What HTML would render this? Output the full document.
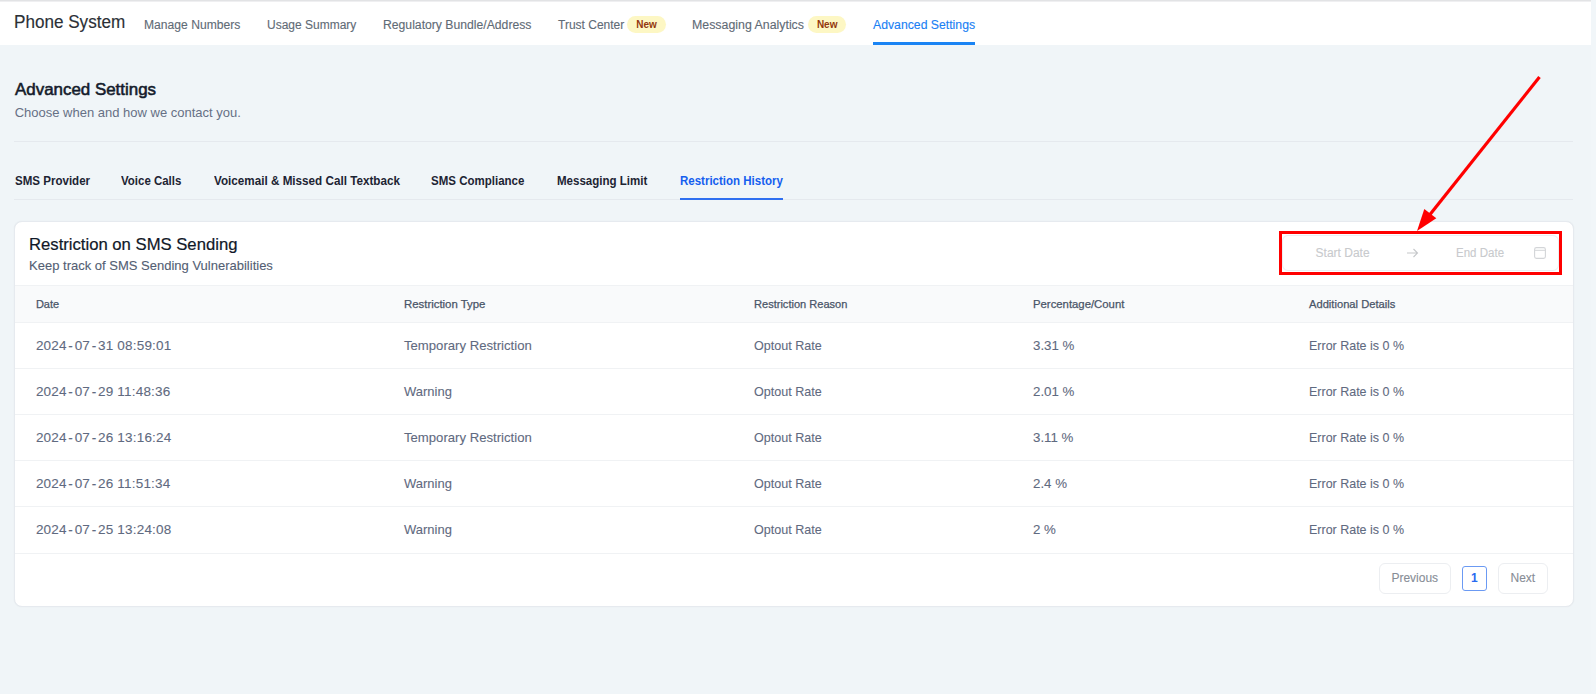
<!DOCTYPE html>
<html>
<head>
<meta charset="utf-8">
<style>
*{box-sizing:border-box;margin:0;padding:0}
html,body{width:1596px;height:694px;overflow:hidden}
body{background:#f0f5f8;font-family:"Liberation Sans",sans-serif;position:relative}
.t{position:absolute;white-space:nowrap}
</style>
</head>
<body>
<div style="position:absolute;left:0;top:0;width:1591px;height:1px;background:#e2e3e5"></div>
<div style="position:absolute;left:0;top:1px;width:1591px;height:1px;background:#efeff1"></div>
<div style="position:absolute;left:0;top:2px;width:1591px;height:43px;background:#fff"></div>
<div style="position:absolute;left:1591px;top:0;width:5px;height:694px;background:#f1f6f9"></div>
<div class="t" style="left:14px;top:13px;font-size:18px;line-height:18px;color:#2b3036;font-weight:normal;transform:scaleX(0.95);transform-origin:0 0;-webkit-text-stroke:0.15px #2b3036">Phone System</div>
<div class="t" style="left:144px;top:19px;font-size:12px;line-height:12px;color:#5f6b76;font-weight:normal;transform:scaleX(1.01);transform-origin:0 0;-webkit-text-stroke:0.12px #5f6b76">Manage Numbers</div>
<div class="t" style="left:267px;top:19px;font-size:12px;line-height:12px;color:#5f6b76;font-weight:normal;-webkit-text-stroke:0.12px #5f6b76">Usage Summary</div>
<div class="t" style="left:382.5px;top:19px;font-size:12px;line-height:12px;color:#5f6b76;font-weight:normal;transform:scaleX(1.016);transform-origin:0 0;-webkit-text-stroke:0.12px #5f6b76">Regulatory Bundle/Address</div>
<div class="t" style="left:558px;top:19px;font-size:12px;line-height:12px;color:#5f6b76;font-weight:normal;-webkit-text-stroke:0.12px #5f6b76">Trust Center</div>
<div class="t" style="left:692.4px;top:19px;font-size:12px;line-height:12px;color:#5f6b76;font-weight:normal;transform:scaleX(1.03);transform-origin:0 0;-webkit-text-stroke:0.12px #5f6b76">Messaging Analytics</div>
<div style="position:absolute;left:627.2px;top:16px;width:38.5px;height:17px;border-radius:9px;background:#fdf7c4"></div>
<div class="t" style="left:636.2px;top:20px;font-size:10px;line-height:10px;color:#93370d;font-weight:bold">New</div>
<div style="position:absolute;left:807.9px;top:16px;width:38.5px;height:17px;border-radius:9px;background:#fdf7c4"></div>
<div class="t" style="left:816.9px;top:20px;font-size:10px;line-height:10px;color:#93370d;font-weight:bold">New</div>
<div class="t" style="left:872.7px;top:19px;font-size:12px;line-height:12px;color:#1a80f4;font-weight:normal;transform:scaleX(1.02);transform-origin:0 0;-webkit-text-stroke:0.12px #1a80f4">Advanced Settings</div>
<div style="position:absolute;left:872.5px;top:42px;width:102.5px;height:3px;background:#1a84f4"></div>
<div class="t" style="left:14.7px;top:81px;font-size:16.5px;line-height:16.5px;color:#141b2b;font-weight:normal;transform:scaleX(1.025);transform-origin:0 0;-webkit-text-stroke:0.55px #141b2b">Advanced Settings</div>
<div class="t" style="left:14.7px;top:106px;font-size:13px;line-height:13px;color:#667085;font-weight:normal">Choose when and how we contact you.</div>
<div style="position:absolute;left:14px;top:141px;width:1559px;height:1px;background:#e5e9ee"></div>
<div class="t" style="left:14.5px;top:175px;font-size:12px;line-height:12px;color:#1d2433;font-weight:bold;transform:scaleX(0.962);transform-origin:0 0">SMS Provider</div>
<div class="t" style="left:121px;top:175px;font-size:12px;line-height:12px;color:#1d2433;font-weight:bold;transform:scaleX(0.956);transform-origin:0 0">Voice Calls</div>
<div class="t" style="left:213.7px;top:175px;font-size:12px;line-height:12px;color:#1d2433;font-weight:bold;transform:scaleX(0.974);transform-origin:0 0">Voicemail &amp; Missed Call Textback</div>
<div class="t" style="left:431.4px;top:175px;font-size:12px;line-height:12px;color:#1d2433;font-weight:bold;transform:scaleX(0.959);transform-origin:0 0">SMS Compliance</div>
<div class="t" style="left:556.9px;top:175px;font-size:12px;line-height:12px;color:#1d2433;font-weight:bold;transform:scaleX(0.961);transform-origin:0 0">Messaging Limit</div>
<div class="t" style="left:679.5px;top:175px;font-size:12px;line-height:12px;color:#155eef;font-weight:bold;transform:scaleX(0.959);transform-origin:0 0">Restriction History</div>
<div style="position:absolute;left:14px;top:199px;width:1559px;height:1px;background:#e5e9ee"></div>
<div style="position:absolute;left:679.5px;top:198px;width:103px;height:2px;background:#2f6ff0"></div>
<div style="position:absolute;left:14px;top:221px;width:1560px;height:386px;background:#fff;border:1px solid #e6eaef;border-radius:8px;box-shadow:0 0 1.5px rgba(16,24,40,0.06)"></div>
<div class="t" style="left:29.1px;top:236px;font-size:16.5px;line-height:16.5px;color:#101828;font-weight:normal;transform:scaleX(1.01);transform-origin:0 0;-webkit-text-stroke:0.2px #101828">Restriction on SMS Sending</div>
<div class="t" style="left:29.1px;top:259px;font-size:13px;line-height:13px;color:#535e73;font-weight:normal;-webkit-text-stroke:0.1px #535e73">Keep track of SMS Sending Vulnerabilities</div>
<div style="position:absolute;left:15px;top:285px;width:1558px;height:37px;background:#f9fafb;border-top:1px solid #f0f2f4"></div>
<div class="t" style="left:35.9px;top:299px;font-size:11px;line-height:11px;color:#4a5568;font-weight:normal;-webkit-text-stroke:0.25px #4a5568">Date</div>
<div class="t" style="left:404px;top:299px;font-size:11px;line-height:11px;color:#4a5568;font-weight:normal;transform:scaleX(1.035);transform-origin:0 0;-webkit-text-stroke:0.25px #4a5568">Restriction Type</div>
<div class="t" style="left:753.6px;top:299px;font-size:11px;line-height:11px;color:#4a5568;font-weight:normal;transform:scaleX(1.005);transform-origin:0 0;-webkit-text-stroke:0.25px #4a5568">Restriction Reason</div>
<div class="t" style="left:1033.1px;top:299px;font-size:11px;line-height:11px;color:#4a5568;font-weight:normal;transform:scaleX(1.03);transform-origin:0 0;-webkit-text-stroke:0.25px #4a5568">Percentage/Count</div>
<div class="t" style="left:1308.8px;top:299px;font-size:11px;line-height:11px;color:#4a5568;font-weight:normal;transform:scaleX(1.015);transform-origin:0 0;-webkit-text-stroke:0.25px #4a5568">Additional Details</div>
<div style="position:absolute;left:15px;top:322px;width:1558px;height:1px;background:#f0f2f4"></div>
<div style="position:absolute;left:15px;top:368px;width:1558px;height:1px;background:#f0f2f4"></div>
<div style="position:absolute;left:15px;top:414px;width:1558px;height:1px;background:#f0f2f4"></div>
<div style="position:absolute;left:15px;top:460px;width:1558px;height:1px;background:#f0f2f4"></div>
<div style="position:absolute;left:15px;top:506px;width:1558px;height:1px;background:#f0f2f4"></div>
<div style="position:absolute;left:15px;top:553px;width:1558px;height:1px;background:#f0f2f4"></div>
<div class="t" style="left:35.9px;top:339px;font-size:13.5px;line-height:13.5px;color:#5f6a80;font-weight:normal;letter-spacing:0.2px;-webkit-text-stroke:0.1px #5f6a80">2024<span style="margin:0 1.6px">-</span>07<span style="margin:0 1.6px">-</span>31 08:59:01</div>
<div class="t" style="left:404px;top:339px;font-size:13.5px;line-height:13.5px;color:#5f6a80;font-weight:normal;transform:scaleX(0.973);transform-origin:0 0;-webkit-text-stroke:0.1px #5f6a80">Temporary Restriction</div>
<div class="t" style="left:753.6px;top:339px;font-size:13.5px;line-height:13.5px;color:#5f6a80;font-weight:normal;transform:scaleX(0.93);transform-origin:0 0;-webkit-text-stroke:0.1px #5f6a80">Optout Rate</div>
<div class="t" style="left:1033.1px;top:339px;font-size:13.5px;line-height:13.5px;color:#5f6a80;font-weight:normal;transform:scaleX(0.985);transform-origin:0 0;-webkit-text-stroke:0.1px #5f6a80">3.31 %</div>
<div class="t" style="left:1308.8px;top:339px;font-size:13.5px;line-height:13.5px;color:#5f6a80;font-weight:normal;transform:scaleX(0.924);transform-origin:0 0;-webkit-text-stroke:0.1px #5f6a80">Error Rate is 0 %</div>
<div class="t" style="left:35.9px;top:385px;font-size:13.5px;line-height:13.5px;color:#5f6a80;font-weight:normal;letter-spacing:0.2px;-webkit-text-stroke:0.1px #5f6a80">2024<span style="margin:0 1.6px">-</span>07<span style="margin:0 1.6px">-</span>29 11:48:36</div>
<div class="t" style="left:404px;top:385px;font-size:13.5px;line-height:13.5px;color:#5f6a80;font-weight:normal;transform:scaleX(0.962);transform-origin:0 0;-webkit-text-stroke:0.1px #5f6a80">Warning</div>
<div class="t" style="left:753.6px;top:385px;font-size:13.5px;line-height:13.5px;color:#5f6a80;font-weight:normal;transform:scaleX(0.93);transform-origin:0 0;-webkit-text-stroke:0.1px #5f6a80">Optout Rate</div>
<div class="t" style="left:1033.1px;top:385px;font-size:13.5px;line-height:13.5px;color:#5f6a80;font-weight:normal;transform:scaleX(0.985);transform-origin:0 0;-webkit-text-stroke:0.1px #5f6a80">2.01 %</div>
<div class="t" style="left:1308.8px;top:385px;font-size:13.5px;line-height:13.5px;color:#5f6a80;font-weight:normal;transform:scaleX(0.924);transform-origin:0 0;-webkit-text-stroke:0.1px #5f6a80">Error Rate is 0 %</div>
<div class="t" style="left:35.9px;top:431px;font-size:13.5px;line-height:13.5px;color:#5f6a80;font-weight:normal;letter-spacing:0.2px;-webkit-text-stroke:0.1px #5f6a80">2024<span style="margin:0 1.6px">-</span>07<span style="margin:0 1.6px">-</span>26 13:16:24</div>
<div class="t" style="left:404px;top:431px;font-size:13.5px;line-height:13.5px;color:#5f6a80;font-weight:normal;transform:scaleX(0.973);transform-origin:0 0;-webkit-text-stroke:0.1px #5f6a80">Temporary Restriction</div>
<div class="t" style="left:753.6px;top:431px;font-size:13.5px;line-height:13.5px;color:#5f6a80;font-weight:normal;transform:scaleX(0.93);transform-origin:0 0;-webkit-text-stroke:0.1px #5f6a80">Optout Rate</div>
<div class="t" style="left:1033.1px;top:431px;font-size:13.5px;line-height:13.5px;color:#5f6a80;font-weight:normal;transform:scaleX(0.985);transform-origin:0 0;-webkit-text-stroke:0.1px #5f6a80">3.11 %</div>
<div class="t" style="left:1308.8px;top:431px;font-size:13.5px;line-height:13.5px;color:#5f6a80;font-weight:normal;transform:scaleX(0.924);transform-origin:0 0;-webkit-text-stroke:0.1px #5f6a80">Error Rate is 0 %</div>
<div class="t" style="left:35.9px;top:477px;font-size:13.5px;line-height:13.5px;color:#5f6a80;font-weight:normal;letter-spacing:0.2px;-webkit-text-stroke:0.1px #5f6a80">2024<span style="margin:0 1.6px">-</span>07<span style="margin:0 1.6px">-</span>26 11:51:34</div>
<div class="t" style="left:404px;top:477px;font-size:13.5px;line-height:13.5px;color:#5f6a80;font-weight:normal;transform:scaleX(0.962);transform-origin:0 0;-webkit-text-stroke:0.1px #5f6a80">Warning</div>
<div class="t" style="left:753.6px;top:477px;font-size:13.5px;line-height:13.5px;color:#5f6a80;font-weight:normal;transform:scaleX(0.93);transform-origin:0 0;-webkit-text-stroke:0.1px #5f6a80">Optout Rate</div>
<div class="t" style="left:1033.1px;top:477px;font-size:13.5px;line-height:13.5px;color:#5f6a80;font-weight:normal;transform:scaleX(0.985);transform-origin:0 0;-webkit-text-stroke:0.1px #5f6a80">2.4 %</div>
<div class="t" style="left:1308.8px;top:477px;font-size:13.5px;line-height:13.5px;color:#5f6a80;font-weight:normal;transform:scaleX(0.924);transform-origin:0 0;-webkit-text-stroke:0.1px #5f6a80">Error Rate is 0 %</div>
<div class="t" style="left:35.9px;top:523px;font-size:13.5px;line-height:13.5px;color:#5f6a80;font-weight:normal;letter-spacing:0.2px;-webkit-text-stroke:0.1px #5f6a80">2024<span style="margin:0 1.6px">-</span>07<span style="margin:0 1.6px">-</span>25 13:24:08</div>
<div class="t" style="left:404px;top:523px;font-size:13.5px;line-height:13.5px;color:#5f6a80;font-weight:normal;transform:scaleX(0.962);transform-origin:0 0;-webkit-text-stroke:0.1px #5f6a80">Warning</div>
<div class="t" style="left:753.6px;top:523px;font-size:13.5px;line-height:13.5px;color:#5f6a80;font-weight:normal;transform:scaleX(0.93);transform-origin:0 0;-webkit-text-stroke:0.1px #5f6a80">Optout Rate</div>
<div class="t" style="left:1033.1px;top:523px;font-size:13.5px;line-height:13.5px;color:#5f6a80;font-weight:normal;transform:scaleX(0.985);transform-origin:0 0;-webkit-text-stroke:0.1px #5f6a80">2 %</div>
<div class="t" style="left:1308.8px;top:523px;font-size:13.5px;line-height:13.5px;color:#5f6a80;font-weight:normal;transform:scaleX(0.924);transform-origin:0 0;-webkit-text-stroke:0.1px #5f6a80">Error Rate is 0 %</div>
<div style="position:absolute;left:1282px;top:235px;width:277px;height:36px;border:1px solid #eceef2;border-radius:6px;background:#fff"></div>
<div class="t" style="left:1315.6px;top:247px;font-size:12px;line-height:12px;color:#c8cacd;font-weight:normal;-webkit-text-stroke:0.1px #c8cacd">Start Date</div>
<svg style="position:absolute;left:1406px;top:247px" width="13" height="12" viewBox="0 0 13 12"><path d="M1 6H11.5M7.5 2L11.5 6L7.5 10" fill="none" stroke="#c5c7ca" stroke-width="1.1"/></svg>
<div class="t" style="left:1456.3px;top:247px;font-size:12px;line-height:12px;color:#c8cacd;font-weight:normal;transform:scaleX(0.96);transform-origin:0 0;-webkit-text-stroke:0.1px #c8cacd">End Date</div>
<svg style="position:absolute;left:1534px;top:247px" width="12" height="12" viewBox="0 0 12 12"><rect x="0.6" y="0.6" width="10.8" height="10.8" rx="1.8" fill="none" stroke="#d3d5d8" stroke-width="1.1"/><path d="M0.6 3.3H11.4" stroke="#d3d5d8" stroke-width="1"/></svg>
<div style="position:absolute;left:1379px;top:562.5px;width:72px;height:31.5px;border:1px solid #eceef1;border-radius:6px"></div>
<div class="t" style="left:1391.4px;top:572px;font-size:12px;line-height:12px;color:#878d96;font-weight:normal;-webkit-text-stroke:0.1px #878d96">Previous</div>
<div style="position:absolute;left:1462px;top:566px;width:25px;height:25px;border:1.5px solid #6b9af3;border-radius:3px"></div>
<div class="t" style="left:1471px;top:572px;font-size:12px;line-height:12px;color:#2a6af0;font-weight:bold">1</div>
<div style="position:absolute;left:1498px;top:562.5px;width:50px;height:31.5px;border:1px solid #eceef1;border-radius:6px"></div>
<div class="t" style="left:1510.5px;top:572px;font-size:12px;line-height:12px;color:#878d96;font-weight:normal;-webkit-text-stroke:0.1px #878d96">Next</div>
<svg style="position:absolute;left:0;top:0" width="1596" height="694"><rect x="1280.5" y="232.5" width="280" height="41" fill="none" stroke="#ff0000" stroke-width="3"/><line x1="1539.5" y1="77" x2="1428" y2="217" stroke="#ff0000" stroke-width="3.2"/><path d="M1417 231L1424.3 209L1436.3 218.3Z" fill="#ff0000"/></svg>
</body>
</html>
